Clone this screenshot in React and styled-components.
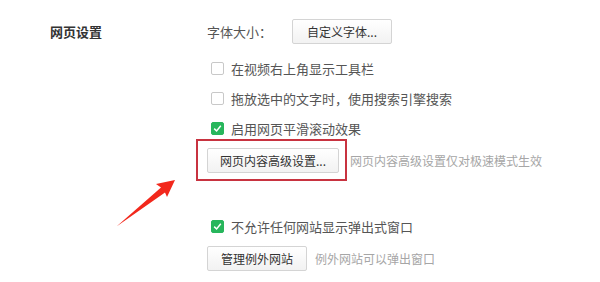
import styled, { createGlobalStyle } from "styled-components"

const GlobalStyle = createGlobalStyle`
  html, body {
    margin: 0;
    padding: 0;
    background: #fff;
  }
  body {
    font-family: "Noto Sans CJK SC", "Noto Sans", sans-serif;
    color: #333;
  }
`

const Page = styled.div`
  position: relative;
  width: 600px;
  height: 282px;
  overflow: hidden;
  display: grid;
  grid-template-columns: 207px 1fr;
  padding-top: 19px;
  box-sizing: border-box;
`

const SectionTitle = styled.div`
  padding-left: 50px;
  height: 25px;
  line-height: 25px;
  font-size: 13px;
  font-weight: bold;
  color: #333;
`

const Options = styled.div`
  display: flex;
  flex-direction: column;
`

const Row = styled.div`
  display: flex;
  align-items: center;
  height: ${(p) => p.$h || 30}px;
  margin-top: ${(p) => p.$mt || 0}px;
  font-size: 13px;
  color: #555;
`

const Label = styled.span`
  width: 85px;
  font-size: 13px;
  color: #555;
`

const Button = styled.button`
  height: 25px;
  padding: 0 ${(p) => p.$px || 13}px;
  font-family: inherit;
  font-size: 12px;
  color: #333;
  background: linear-gradient(#ffffff, #f2f2f2);
  border: 1px solid #d4d4d4;
  border-radius: 2px;
  cursor: pointer;
`

const Hint = styled.span`
  margin-left: ${(p) => p.$ml || 8}px;
  font-size: 12px;
  color: #a6a6a6;
`

const Box = styled.span`
  display: inline-flex;
  align-items: center;
  justify-content: center;
  width: 13px;
  height: 13px;
  margin-left: 4px;
  margin-right: 7px;
  box-sizing: border-box;
  border-radius: 2px;
  border: 1px solid ${(p) => (p.$checked ? "#27b65c" : "#c8c8c8")};
  background: ${(p) => (p.$checked ? "#27b65c" : "#fff")};
`

const Highlight = styled.span`
  position: relative;
  display: inline-flex;
  &::after {
    content: "";
    position: absolute;
    top: -9px;
    left: -11px;
    right: -8px;
    bottom: -8px;
    border: 2px solid #c83340;
    pointer-events: none;
  }
`

const Overlay = styled.svg`
  position: absolute;
  left: 0;
  top: 0;
  pointer-events: none;
`

const Checkbox = ({ checked, children, mt }) => (
  <Row $mt={mt}>
    <Box $checked={checked}>
      {checked && (
        <svg width="9" height="9" viewBox="0 0 9 9">
          <path d="M1.2 4.6 L3.6 7 L7.8 1.8" fill="none" stroke="#fff" strokeWidth="1.5" />
        </svg>
      )}
    </Box>
    {children}
  </Row>
)

export default function App() {
  return (
    <>
      <GlobalStyle />
      <Page>
        <SectionTitle>网页设置</SectionTitle>
        <Options>
          <Row $h={25}>
            <Label>字体大小：</Label>
            <Button $px={14}>自定义字体...</Button>
          </Row>
          <Checkbox mt={9}>在视频右上角显示工具栏</Checkbox>
          <Checkbox>拖放选中的文字时，使用搜索引擎搜索</Checkbox>
          <Checkbox checked>启用网页平滑滚动效果</Checkbox>
          <Row $h={25} $mt={5}>
            <Highlight>
              <Button $px={12}>网页内容高级设置...</Button>
            </Highlight>
            <Hint $ml={11}>网页内容高级设置仅对极速模式生效</Hint>
          </Row>
          <Checkbox checked mt={38}>不允许任何网站显示弹出式窗口</Checkbox>
          <Row $h={25} $mt={5}>
            <Button $px={13}>管理例外网站</Button>
            <Hint $ml={8}>例外网站可以弹出窗口</Hint>
          </Row>
        </Options>
        <Overlay width="600" height="282" viewBox="0 0 600 282">
          <polygon
            points="116.5,226.5 161,187.5 156,184 175,180 167,197 165,192.5"
            fill="#f2281c"
          />
        </Overlay>
      </Page>
    </>
  )
}
